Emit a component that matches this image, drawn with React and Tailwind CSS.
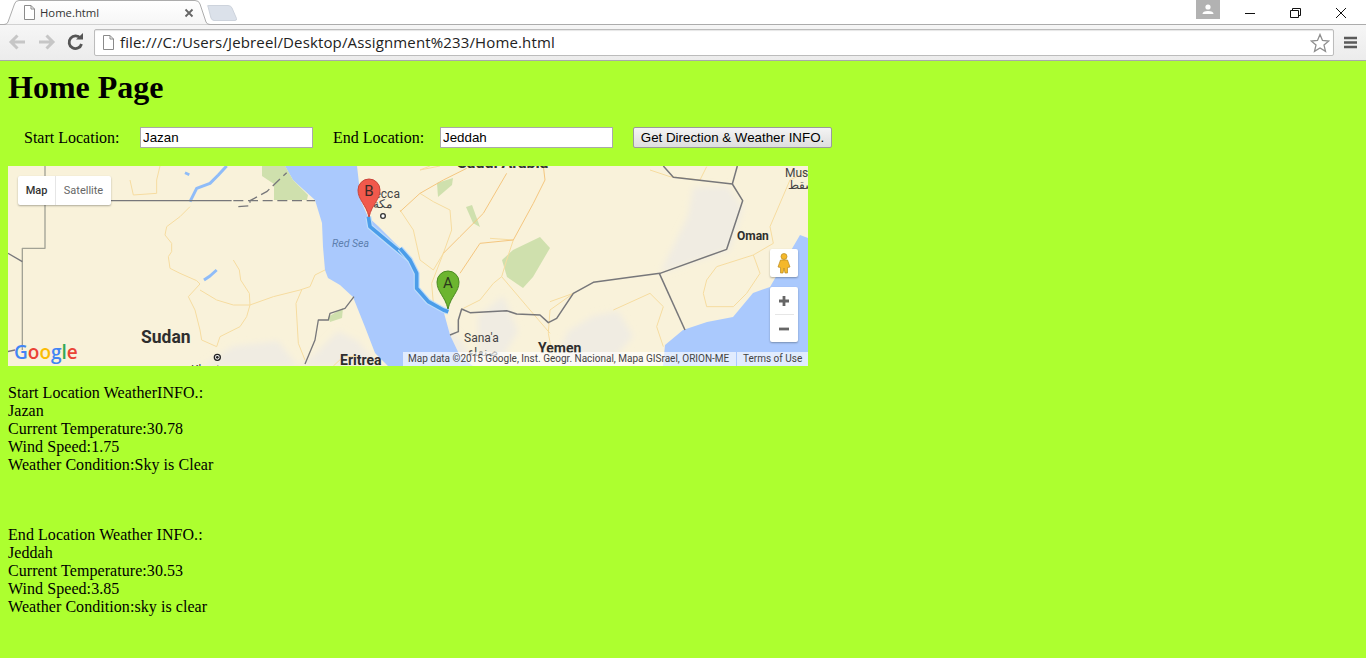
const roads = "#f6dca0";
const highways = "#f4c67e";
const borders = "#77777a";

// polylines below are in 3x crop coordinates, the two groups scale them back down
const leftRoads = [
  "570,140 540,170 500,200 495,225 515,250 515,275 505,290 510,325 540,340 590,362 600,372 565,410 585,450 600,510 605,540 650,560",
  "600,390 650,420 700,435 750,435 820,410 900,390 930,380 945,345 975,330",
  "650,560 660,530 720,500 740,470 750,435 748,400 722,360 718,330 700,300",
  "390,60 400,105 470,100 470,60 480,18",
  "905,390 888,430 895,550 915,600",
  "1000,618 1030,590 1070,590",
];
const rightRoads = [
  "60,100 100,125 150,150 155,210 130,280 95,370 100,430",
  "0,150 40,210 60,300 100,330 130,280",
  "270,235 340,240 320,300 305,350 390,450 450,520",
  "305,350 280,370 240,420 190,445",
  "450,425 520,400 450,450 445,520 460,600",
  "640,450 750,400 790,440 770,500 790,560",
  "920,360 950,320 1060,285 1080,340 1040,400 1000,440 920,440 910,400 920,360",
  "750,30 810,50 900,60 920,20",
  "1060,285 1120,250 1110,200 1170,60 1230,30",
  "120,18 60,30 90,18",
];
const rightHighways = [
  "0,155 60,100 130,60 200,25",
  "130,280 180,230 250,160 320,40",
  "180,340 240,250 340,240 400,130 435,60 430,18",
];

const Tab = () => (
  <svg width="240" height="25" className="absolute left-0 top-0">
    <defs>
      <linearGradient id="tabFill" x1="0" y1="0" x2="0" y2="1">
        <stop offset="0" stopColor="#ffffff" />
        <stop offset="1" stopColor="#f6f6f6" />
      </linearGradient>
    </defs>
    <path
      d="M0 24.5H4Q7 24.5 8 22L14.500 4Q15.500 .5 19 .5H195Q199 .5 200 4L206 22Q207 24.500 210 24.500"
      fill="url(#tabFill)"
      stroke="#acacac"
    />
    <path d="M208 6.500Q206.500 5.500 209 5.500H228Q231 5.500 232 8L236.500 18.500Q237 20.500 235 20.500H214Q212 20.500 211 18Z" fill="#dbe1ea" stroke="#cdd3dc" />
  </svg>
);

const PageIcon = () => (
  <svg width="13" height="15" viewBox="0 0 13 15" fill="#fff" stroke="#8a8a8a">
    <path d="M1.500 .5H8L11.500 4V14.500H1.500Z" />
    <path d="M8 .5V4H11.500" fill="none" />
  </svg>
);

const Toolbar = () => (
  <div className="flex h-[36px] items-center border-b border-[#a9a9a9] bg-gradient-to-b from-[#f6f6f6] to-[#ececec]">
    <svg width="94" height="36" className="shrink-0">
      <path d="M11 17H25M17.500 10.500L11 17L17.500 23.500" fill="none" stroke="#c6c6c6" strokeWidth="3" />
      <path d="M39 17H53M46.500 10.500L53 17L46.500 23.500" fill="none" stroke="#c6c6c6" strokeWidth="3" />
      <path d="M80.500 13.500A6.300 6.300 0 1 0 81.500 19" fill="none" stroke="#555" strokeWidth="2.800" />
      <path d="M76 14.500H83V8Z" fill="#555" />
    </svg>
    <div className="flex h-[27px] w-[1240px] items-center rounded-[2px] border border-[#bcbcbc] bg-white pl-[7px] shadow-[inset_0_1px_1px_#e6e6e6]">
      <PageIcon />
      <span className="ml-[5px] font-['Open_Sans',sans-serif] text-[15px] leading-none tracking-[0.14px] text-[#222]">
        file:///C:/Users/Jebreel/Desktop/Assignment%233/Home.html
      </span>
      <svg width="20" height="20" viewBox="0 0 20 20" className="ml-auto mr-[3px]">
        <path d="M10 1.500L12.500 7.500L18.800 8L14 12.100L15.500 18.400L10 15L4.500 18.400L6 12.100L1.200 8L7.500 7.500Z" fill="#fff" stroke="#8e8e8e" strokeWidth="1.300" />
      </svg>
    </div>
    <svg width="14" height="13" className="ml-[10px]">
      <path d="M0 2H13M0 6.500H13M0 11H13" stroke="#5a5a5a" strokeWidth="2.400" />
    </svg>
  </div>
);

const Chrome = () => (
  <div className="flex h-[61px] flex-col font-['Open_Sans',sans-serif]">
    <div className="relative flex h-[25px] shrink-0 justify-end border-b border-[#acacac] bg-white">
      <Tab />
      <div className="absolute left-[23px] top-[5px]">
        <PageIcon />
      </div>
      <span className="absolute left-[40px] top-[5px] text-[11.3px] leading-[16px] text-[#333]">Home.html</span>
      <svg width="10" height="10" className="absolute left-[184px] top-[8px]">
        <path d="M1.500 1.500L8.500 8.500M8.500 1.500L1.500 8.500" stroke="#666" strokeWidth="1.800" />
      </svg>
      <div className="flex h-[24px] items-start">
        <div className="flex h-[19px] w-[24px] items-center justify-center bg-[#b2b2b2]">
          <svg width="12" height="11">
            <circle cx="6" cy="3" r="2.600" fill="#fff" />
            <path d="M0.500 10Q.5 7 6 7Q11.500 7 11.500 10Z" fill="#fff" />
          </svg>
        </div>
        <svg width="146" height="24">
          <path d="M25 13.500H35" stroke="#111" />
          <path d="M70.500 10.500H78.500V17.500H70.500ZM72.500 10V8.500H80.500V15.500H78.500" fill="none" stroke="#111" />
          <path d="M116 8L126 18M126 8L116 18" stroke="#111" />
        </svg>
      </div>
    </div>
    <Toolbar />
  </div>
);

const MapDrawing = () => (
  <svg viewBox="0 0 800 200" width="800" height="200" className="block bg-[#f9f2da]">
    <defs>
      <filter id="soft" x="-10%" y="-10%" width="120%" height="120%">
        <feGaussianBlur stdDeviation="3" />
      </filter>
    </defs>
    <g filter="url(#soft)" fill="#f0ece2">
      <path d="M685 21L720 20L735 42L722 84L652 107L680 50Z" />
      <path d="M560 165L585 150L610 145L625 170L600 200L545 200Z" />
      <path d="M290 200L310 185L330 165L350 175L370 200Z" />
      <path d="M195 200L225 180L270 175L290 200Z" />
      <path d="M360 60L385 90L395 130L425 145L450 170L470 200L440 200L430 150L405 130L400 90Z" />
      <path d="M470 150L495 130L510 165L490 200L470 190Z" />
    </g>

    <path d="M277 0L285 14L307 34L314 57L315 81L317 104L320 112L332 119L345 131L357 161L367 187L380 200H465L452 190L442 169L436 147L422 136L410 125L407 107L400 90L392 82L370 60L360 51L353 35L349 0Z" fill="#aac9fd" />
    <path d="M655 200L657 179L675 164L699 156L725 151L745 127L762 121L785 81L792 69L800 72V200Z" fill="#aac9fd" />

    <g fill="#cfe0ad">
      <path d="M494 94L505 84L532 71L542 82L525 111L515 122L499 111Z" />
      <path d="M429 17L445 12L444 19L430 31Z" />
      <path d="M458 41L464 39L472 61L465 57Z" />
      <path d="M254 0H277L285 14L300 29L299 34H266V18L254 10Z" />
      <path d="M320 151L335 142L334 152L322 156Z" />
    </g>

    <g transform="translate(-8,-6) scale(.33333)" fill="none" strokeLinejoin="round">
      {leftRoads.map((points) => (
        <polyline key={points} points={points} stroke={roads} strokeWidth="3" />
      ))}
      <polyline points="570,125 590,85 630,70 655,45 680,18" stroke="#8fbcf8" strokeWidth="9" />
      <polyline points="612,360 630,348 650,330" stroke="#8fbcf8" strokeWidth="9" />
      <polyline points="555,38 568,44" stroke="#8fbcf8" strokeWidth="8" />
      <polyline points="333,122 695,122" stroke={borders} strokeWidth="4" />
      <polyline points="700,122 945,122" stroke={borders} strokeWidth="4" strokeDasharray="30 14" />
      <polyline points="715,140 750,137 750,122 800,95 860,38" stroke={borders} strokeWidth="4" strokeDasharray="30 14" />
      <polyline points="135,18 135,265 67,265 67,570" stroke="#a2a295" strokeWidth="4" />
      <polyline points="24,280 67,305" stroke={borders} strokeWidth="4" />
      <polyline points="22,575 45,570" stroke={borders} strokeWidth="4" />
      <polyline points="1062,410 1035,445 990,460 985,480 955,480 945,540 915,612" stroke={borders} strokeWidth="4" />
      <polyline points="1105,170 1110,200 1170,250 1230,300" stroke="#bcdcfb" strokeWidth="18" />
      <polyline points="1105,170 1110,200 1170,250 1230,300" stroke="#4b9de9" strokeWidth="11" />
      <circle cx="1149" cy="168" r="7" fill="#fff" stroke="#333" strokeWidth="4" />
      <circle cx="652" cy="592" r="9" fill="#fff" stroke="#222" strokeWidth="4" />
      <circle cx="652" cy="592" r="4" fill="#222" />
    </g>

    <g transform="translate(392,-6) scale(.33333)" fill="none" strokeLinejoin="round">
      {rightRoads.map((points) => (
        <polyline key={points} points={points} stroke={roads} strokeWidth="3" />
      ))}
      {rightHighways.map((points) => (
        <polyline key={points} points={points} stroke={highways} strokeWidth="3" />
      ))}
      <polyline points="150,525 175,515 175,480 185,447 210,458 320,452 350,462 420,465 445,488 470,475 520,400 580,367 690,352 780,340 980,268 1028,122 997,72 820,52 790,18" stroke={borders} strokeWidth="4.500" />
      <polyline points="997,72 1012,18" stroke={borders} strokeWidth="4.500" />
      <polyline points="778,340 855,510" stroke={borders} strokeWidth="4.500" />
      <polyline points="0,265 30,300 50,340 50,385 85,425 130,450 145,455" stroke="#bcdcfb" strokeWidth="18" />
      <polyline points="0,265 30,300 50,340 50,385 85,425 130,450 145,455" stroke="#4b9de9" strokeWidth="11" />
    </g>

    <g fontFamily="Roboto, sans-serif">
      <text x="133" y="177" fontSize="17.500" fontWeight="700" fill="#2e2e2e">Sudan</text>
      <text x="332" y="199" fontSize="14" fontWeight="700" fill="#2e2e2e">Eritrea</text>
      <text x="183" y="208" fontSize="12" fill="#444">Khartoum</text>
      <text x="729" y="74" fontSize="12" fontWeight="700" fill="#2e2e2e">Oman</text>
      <text x="456" y="176" fontSize="12" fill="#444">Sana'a</text>
      <text x="460" y="190" fontSize="12" fill="#444" fontFamily="'Noto Sans', sans-serif">صنعاء</text>
      <text x="530" y="187" fontSize="14" fontWeight="700" fill="#2e2e2e">Yemen</text>
      <text x="449" y="2" fontSize="16" fontWeight="700" fill="#333">Saudi Arabia</text>
      <text x="777" y="11" fontSize="12" fill="#444">Mus</text>
      <text x="780" y="23" fontSize="12" fill="#444" fontFamily="'Noto Sans', sans-serif">مسقط</text>
      <text x="356" y="32" fontSize="12" fill="#444">Mecca</text>
      <text x="365" y="42" fontSize="12" fill="#444" fontFamily="'Noto Sans', sans-serif">مكة</text>
      <text x="324" y="81" fontSize="10.500" fontStyle="italic" fill="#5d7fae">Red Sea</text>
      <text x="6" y="193" fontSize="19" fontWeight="600" fontFamily="'Open Sans', sans-serif">
        <tspan fill="#4285f4">G</tspan>
        <tspan fill="#ea4335">o</tspan>
        <tspan fill="#fbbc05">o</tspan>
        <tspan fill="#4285f4">g</tspan>
        <tspan fill="#34a853">l</tspan>
        <tspan fill="#ea4335">e</tspan>
      </text>
    </g>

    <path d="M361 51C358 38 350 34 350 24A11 11 0 0 1 372 24C372 34 364 38 361 51Z" fill="#f1594c" stroke="#c9443a" />
    <text x="361" y="30" textAnchor="middle" fontSize="15" fontFamily="Roboto, sans-serif" fill="#3c2a25">B</text>
    <path d="M440 143C437 130 429 126 429 116A11 11 0 0 1 451 116C451 126 443 130 440 143Z" fill="#6cb52f" stroke="#4a8a22" />
    <text x="440" y="122" textAnchor="middle" fontSize="15" fontFamily="Roboto, sans-serif" fill="#2c3a1c">A</text>
  </svg>
);

const MapView = () => (
  <div className="relative h-[200px] w-[800px] overflow-hidden font-['Roboto',sans-serif]">
    <MapDrawing />
    <div className="absolute left-[10px] top-[10px] flex h-[29px] rounded-[2px] bg-white text-[11px] shadow-[0_1px_2px_rgba(0,0,0,0.3)]">
      <span className="flex w-[38px] items-center justify-center border-r border-[#e6e6e6] font-medium text-[#333]">Map</span>
      <span className="flex w-[55px] items-center justify-center text-[#666]">Satellite</span>
    </div>
    <div className="absolute left-[762px] top-[83px] flex h-[28px] w-[28px] items-center justify-center rounded-[2px] bg-white shadow-[0_1px_2px_rgba(0,0,0,0.3)]">
      <svg width="14" height="21" viewBox="0 0 14 21">
        <circle cx="7" cy="3.500" r="3" fill="#f5b82a" stroke="#b98a20" strokeWidth=".7" />
        <path d="M3.500 7H10.500L13 14L10.500 14.500V20H8L7 15L6 20H3.500V14.500L1 14Z" fill="#f5b82a" stroke="#b98a20" strokeWidth=".7" />
      </svg>
    </div>
    <div className="absolute left-[762px] top-[121px] flex h-[55px] w-[28px] flex-col items-center rounded-[2px] bg-white shadow-[0_1px_2px_rgba(0,0,0,0.3)]">
      <svg width="12" height="27" className="shrink-0">
        <path d="M1 14H11M6 9V19" stroke="#666" strokeWidth="2.800" />
      </svg>
      <div className="h-px w-[19px] shrink-0 bg-[#e6e6e6]" />
      <svg width="12" height="27" className="shrink-0">
        <path d="M1 14H11" stroke="#666" strokeWidth="2.800" />
      </svg>
    </div>
    <div className="absolute bottom-0 right-0 flex h-[14px] gap-px text-[10px] leading-[14px] text-[#444]">
      <span className="w-[333px] bg-white/65 pl-[5px] whitespace-nowrap">Map data ©2015 Google, Inst. Geogr. Nacional, Mapa GISrael, ORION-ME</span>
      <span className="w-[71px] bg-white/65 pl-[6px] whitespace-nowrap">Terms of Use</span>
    </div>
  </div>
);

const Weather = ({ title, city, temp, wind, condition, className }) => (
  <div className={className}>
    <div>{title}</div>
    <div>{city}</div>
    <div>Current Temperature:{temp}</div>
    <div>Wind Speed:{wind}</div>
    <div>Weather Condition:{condition}</div>
  </div>
);

export default function App() {
  return (
    <div className="flex h-[658px] flex-col overflow-hidden bg-[#adff2f] font-['Liberation_Serif',serif] text-[16px] leading-[18px] text-black">
      <Chrome />
      <main className="px-2 pt-2">
        <h1 className="text-[32px] font-bold leading-[37px]">Home Page</h1>
        <div className="mt-[21px] flex h-[21px] items-center pl-4">
          <label className="w-[116px]">Start Location:</label>
          <input
            defaultValue="Jazan"
            className="h-[21px] w-[173px] border border-[#a9a9a9] bg-white px-[2px] font-['Liberation_Sans',sans-serif] text-[13.33px] text-black"
          />
          <label className="ml-[20px] w-[107px]">End Location:</label>
          <input
            defaultValue="Jeddah"
            className="h-[21px] w-[173px] border border-[#a9a9a9] bg-white px-[2px] font-['Liberation_Sans',sans-serif] text-[13.33px] text-black"
          />
          <button
            type="button"
            className="ml-[20px] h-[21px] w-[199px] rounded-[2px] border border-[#9a9a9a] bg-gradient-to-b from-[#f4f4f4] to-[#dedede] font-['Liberation_Sans',sans-serif] text-[13.33px] text-black"
          >
            Get Direction &amp; Weather INFO.
          </button>
        </div>
        <div className="mt-[18px]">
          <MapView />
        </div>
        <Weather
          className="mt-[18px] tracking-[0.06px]"
          title="Start Location WeatherINFO.:"
          city="Jazan"
          temp="30.78"
          wind="1.75"
          condition="Sky is Clear"
        />
        <Weather
          className="mt-[52px] tracking-[0.06px]"
          title="End Location Weather INFO.:"
          city="Jeddah"
          temp="30.53"
          wind="3.85"
          condition="sky is clear"
        />
      </main>
    </div>
  );
}
